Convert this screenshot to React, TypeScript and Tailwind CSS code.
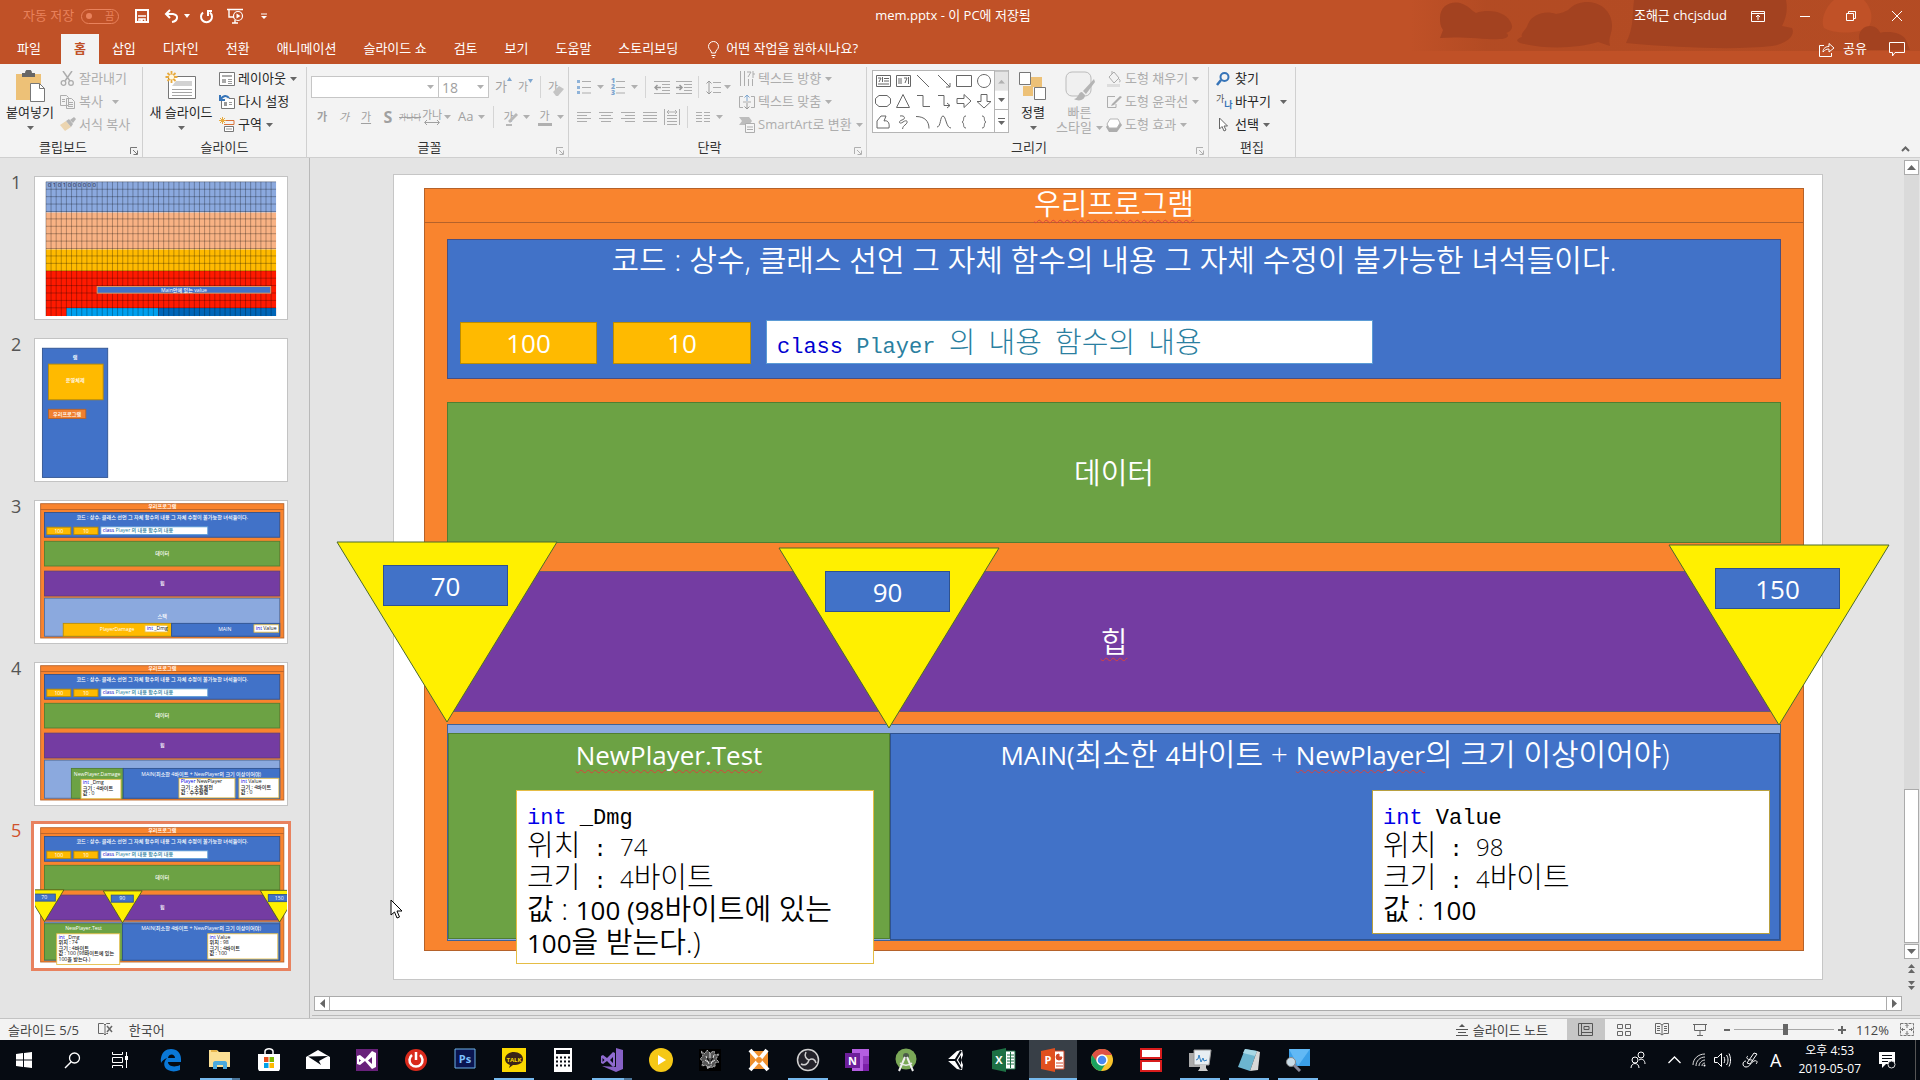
import type { ReactNode } from "react";

const tabsAfterHome = [
  "삽입",
  "디자인",
  "전환",
  "애니메이션",
  "슬라이드 쇼",
  "검토",
  "보기",
  "도움말",
  "스토리보딩",
];

function Caret({ dim = false }: { dim?: boolean }) {
  return (
    <svg width="7" height="4" viewBox="0 0 7 4" className={dim ? "shrink-0 text-[#b0b0b0]" : "shrink-0 text-[#666]"}>
      <path d="M0 0h7L3.500 4z" fill="currentColor" />
    </svg>
  );
}

function Svg({ w, h, children }: { w: number; h: number; children: ReactNode }) {
  return (
    <svg width={w} height={h} viewBox={`0 0 ${w} ${h}`} fill="none" className="shrink-0">
      {children}
    </svg>
  );
}

/* ---------- title bar ---------- */

function TitleBar() {
  return (
    <header className="relative bg-[#c05127] text-white">
      <svg width="510" height="52" viewBox="0 0 510 52" className="absolute top-0 right-0">
        <defs>
          <linearGradient id="haze" x1="0" x2="1">
            <stop offset="0" stopColor="#a84620" stopOpacity="0" />
            <stop offset="0.15" stopColor="#a84620" stopOpacity="0.55" />
            <stop offset="1" stopColor="#a84620" stopOpacity="0.5" />
          </linearGradient>
        </defs>
        <rect width="510" height="51" fill="url(#haze)" />
        <g fill="#a34220">
          <path d="M30 18C30 6 40 1 50 3c8 2 12 8 16 10 12-4 28-2 34 8 4 6 2 10-4 12 4 2 2 5-4 6-14 1-40-3-62-1l3-8c-3-4-3-8-3-12z" />
          <path d="M118 24c4-10 18-14 28-10 6-1 8-2 12-4 6-6 12-8 20-8 16 1 24 12 24 24 0 8-4 12-2 20l-12-4c-20 6-50 8-78 1-4-2-4-4 2-6-2-4 4-6 6-13z" />
          <path d="M224 0h152c2 10 0 18-4 26l10 2c4 8-6 16-20 18-36 4-90 2-146-3 8-16 6-26 8-43z" />
        </g>
        <path d="M424 0h30c8 8 10 20 4 28-12 6-34 6-44 0-4-8 2-22 10-28z" fill="#c05127" />
        <g fill="#a34220">
          <circle cx="460" cy="37" r="11" />
          <path d="M466 34c10-4 26-2 30 6l4 10h-46z" />
        </g>
      </svg>

      <div className="relative grid h-[32px] grid-cols-[1fr_auto_1fr] items-center text-[13px]">
        <div className="flex items-center pl-[23px]">
          <span className="text-[#e9825c]">자동 저장</span>
          <button
            aria-label="자동 저장"
            className="ml-[7px] flex h-[15px] w-[38px] items-center justify-between rounded-full border border-[#e9825c] px-[4px] text-[10px] leading-none text-[#e9825c]"
          >
            <span className="size-[6px] rounded-full bg-[#e9825c]" />끔
          </button>
          <button aria-label="저장" className="ml-[16px]">
            <Svg w={14} h={14}>
              <path d="M1 1h12v12H1z" stroke="#fff" strokeWidth="2" />
              <path d="M3 7h8M4 10h2v3H4zM7 10h3v3H7z" stroke="#fff" strokeWidth="1.500" />
            </Svg>
          </button>
          <button aria-label="실행 취소" className="ml-[15px] flex items-center gap-[5px]">
            <Svg w={15} h={14}>
              <path d="M6 1 2 5l4 4M2 5h7c6 1 5 7-1 8" stroke="#fff" strokeWidth="2" />
            </Svg>
            <svg width="6" height="4" viewBox="0 0 6 4"><path d="M0 0h6L3 4z" fill="#fff" /></svg>
          </button>
          <button aria-label="다시 실행" className="ml-[9px]">
            <Svg w={15} h={15}>
              <path d="M4 3.500a5.500 5.500 0 1 0 7 0M13 2H9v5" stroke="#fff" strokeWidth="2" />
            </Svg>
          </button>
          <button aria-label="처음부터 시작" className="ml-[13px]">
            <Svg w={17} h={16}>
              <path d="M0 1.500h16M2 2v7h5M8 12v3M5 15h6" stroke="#fff" strokeWidth="1.400" />
              <circle cx="11" cy="8" r="4.500" stroke="#fff" strokeWidth="1.200" />
              <path d="M9.500 5.500v5l4-2.500z" fill="#fff" />
            </Svg>
          </button>
          <button aria-label="빠른 실행 도구 모음 사용자 지정" className="ml-[17px]">
            <Svg w={6} h={7}>
              <path d="M0 1h6" stroke="#fff" />
              <path d="M0 3h6L3 6z" fill="#fff" />
            </Svg>
          </button>
        </div>
        <h1 className="mr-[14px]">mem.pptx - 이 PC에 저장됨</h1>
        <div className="flex items-center justify-end pr-[18px]">
          <span>조해근 chcjsdud</span>
          <button aria-label="리본 메뉴 표시 옵션" className="ml-[24px]">
            <Svg w={14} h={11}>
              <path d="M.500.500h13v10H.500zM.500 2.500h13M7 9V4M5 6l2-2 2 2" stroke="#fff" />
            </Svg>
          </button>
          <button aria-label="최소화" className="ml-[35px]">
            <Svg w={10} h={10}><path d="M0 5.500h10" stroke="#fff" /></Svg>
          </button>
          <button aria-label="이전 크기로 복원" className="ml-[36px]">
            <Svg w={10} h={10}><path d="M.500 2.500h7v7h-7zM2.500 2.500v-2h7v7h-2" stroke="#fff" /></Svg>
          </button>
          <button aria-label="닫기" className="ml-[36px]">
            <Svg w={10} h={10}><path d="m0 0 10 10M10 0 0 10" stroke="#fff" /></Svg>
          </button>
        </div>
      </div>

      <nav className="relative flex h-[32px] items-end text-[13px]">
        <button className="ml-[4px] h-[30px] px-[13px]">파일</button>
        <button className="ml-[7px] h-[30px] bg-[#f3f3f3] px-[13px] font-bold text-[#c05127]">홈</button>
        <div className="flex gap-px">
          {tabsAfterHome.map((t) => (
            <button key={t} className="h-[30px] px-[13px]">{t}</button>
          ))}
        </div>
        <button className="ml-[17px] flex h-[30px] items-center gap-[7px]">
          <Svg w={11} h={17}>
            <path d="M3.500 12C3.500 9 .500 8.500.500 5.500a5 5 0 0 1 10 0C10.500 8.500 7.500 9 7.500 12zM3.500 14.500h4M4.500 16.500h2" stroke="#fff" />
          </Svg>
          어떤 작업을 원하시나요?
        </button>
        <button className="ml-auto flex h-[30px] items-center gap-[8px]">
          <Svg w={16} h={15}>
            <path d="M5 3.500H.500v11h12V11" stroke="#fff" />
            <path d="M4 10c0-4 3-5.500 6-5.500V1.500l5 4.500-5 4V7c-3 0-4 1-6 3z" stroke="#fff" />
          </Svg>
          공유
        </button>
        <button aria-label="메모" className="mr-[15px] ml-[22px] h-[30px]">
          <Svg w={16} h={15}>
            <path d="M.500.500h15v10H6L3.500 14v-3.500h-3z" stroke="#fff" />
          </Svg>
        </button>
      </nav>
    </header>
  );
}

/* ---------- ribbon ---------- */

function Group({ label, launcher, dim, className, children }: {
  label: string;
  launcher?: boolean;
  dim?: boolean;
  className: string;
  children: ReactNode;
}) {
  return (
    <section className={`relative flex shrink-0 flex-col border-r border-[#d0d0d0] ${className}`}>
      <div className="flex h-[70px]">{children}</div>
      <h2 className="text-center text-[13px] leading-[20px] text-[#333]">{label}</h2>
      {launcher && (
        <button aria-label={`${label} 설정`} className="absolute right-[4px] bottom-[2px]">
          <Svg w={8} h={8}>
            <path d="M.500 7V.500H7M3 3l4 4M7.500 3.500v4h-4" stroke={dim ? "#b0b0b0" : "#777"} />
          </Svg>
        </button>
      )}
    </section>
  );
}

function RowButton({ icon, text, dim, caret, wide }: {
  icon: ReactNode;
  text: string;
  dim?: boolean;
  caret?: boolean;
  wide?: boolean;
}) {
  return (
    <button className={`flex h-[23px] items-center whitespace-nowrap text-[13px] ${dim ? "text-[#adadad]" : "text-[#262626]"}`}>
      <span className="flex w-[19px] shrink-0 items-center">{icon}</span>
      {text}
      {caret && <span className={wide ? "ml-[9px]" : "ml-[4px]"}><Caret dim={dim} /></span>}
    </button>
  );
}

function BigButton({ icon, lines, dim, className }: { icon: ReactNode; lines: string[]; dim?: boolean; className: string }) {
  return (
    <button className={`flex shrink-0 flex-col items-center whitespace-nowrap text-[13px] leading-[15px] ${dim ? "text-[#adadad]" : "text-[#262626]"} ${className}`}>
      <span className="mt-[3px] mb-[3px] flex h-[32px] items-center">{icon}</span>
      {lines.map((l, i) => (
        <span key={l} className="flex items-center gap-[4px]">
          {l}
          {dim && i === lines.length - 1 && <Caret dim />}
        </span>
      ))}
      {!dim && <span className="mt-[6px] flex"><Caret /></span>}
    </button>
  );
}

function Divider() {
  return <span className="h-[22px] w-px shrink-0 bg-[#d5d5d5]" />;
}

function Lines({ kind }: { kind: "left" | "center" | "right" | "justify" }) {
  const d = {
    left: "M0 .5h14M0 3.500h10M0 6.500h14M0 9.500h10",
    center: "M0 .5h14M2 3.500h10M0 6.500h14M2 9.500h10",
    right: "M0 .5h14M4 3.500h10M0 6.500h14M4 9.500h10",
    justify: "M0 .5h14M0 3.500h14M0 6.500h14M0 9.500h14",
  }[kind];
  return <Svg w={14} h={11}><path d={d} stroke="#adadad" /></Svg>;
}

function ClipboardGroup() {
  return (
    <Group label="클립보드" launcher className="w-[143px] pr-[16px]">
      <BigButton
        className="w-[60px]"
        lines={["붙여넣기"]}
        icon={
          <Svg w={30} h={32}>
            <path d="M1 4h25v26H1z" fill="#edc177" />
            <path d="M7 7V3h3a3.500 3.500 0 0 1 7 0h3v4z" fill="#666" />
            <path d="M15.500 13.500h9l5 5v13h-14z" fill="#fff" stroke="#777" />
            <path d="M24.500 13.500v5h5" stroke="#777" />
          </Svg>
        }
      />
      <div className="flex flex-col">
        <RowButton dim text="잘라내기" icon={
          <Svg w={15} h={15}>
            <path d="m3 0 7 10M12 0 5 10" stroke="#adadad" strokeWidth="1.500" />
            <circle cx="3.500" cy="12" r="2.300" stroke="#adadad" strokeWidth="1.300" />
            <circle cx="11" cy="12" r="2.300" stroke="#adadad" strokeWidth="1.300" />
          </Svg>
        } />
        <RowButton dim caret wide text="복사" icon={
          <Svg w={16} h={14}>
            <path d="M.500.500h6l2 2v8h-8zM6.500 3.500h5l3 3v7h-8z" fill="#f3f3f3" stroke="#adadad" />
            <path d="M8 7.500h5M8 9.500h5M8 11.500h5M2 4.500h3M2 6.500h3" stroke="#adadad" />
          </Svg>
        } />
        <RowButton dim text="서식 복사" icon={
          <Svg w={16} h={15}>
            <path d="M0 8l6-4 5 6-6 4z" fill="#ecd5b0" />
            <path d="m6 4 3-2 4 5-2 3zM10 3l4-3 2 2-3 4z" fill="#b5b5b5" />
          </Svg>
        } />
      </div>
    </Group>
  );
}

function SlidesGroup() {
  return (
    <Group label="슬라이드" className="w-[164px]">
      <BigButton
        className="ml-[4px] w-[68px]"
        lines={["새 슬라이드"]}
        icon={
          <Svg w={32} h={32}>
            <path d="M3.500 6.500h27v22h-27z" fill="#fff" stroke="#777" />
            <path d="M11 11h16v5H7z" fill="#d2d2d2" />
            <path d="M7 19.500h20M7 22.500h20M7 25.500h20" stroke="#a5a5a5" />
            <path d="M6.500 1v12M.500 7h12M2.500 3l8 8M10.500 3l-8 8" stroke="#e8ab3f" strokeWidth="1.800" />
            <circle cx="6.500" cy="7" r="2.500" fill="#fff7df" />
          </Svg>
        }
      />
      <div className="ml-[4px] flex flex-col">
        <RowButton caret text="레이아웃" icon={
          <Svg w={16} h={14}>
            <path d="M.500.500h15v13H.500z" fill="#fff" stroke="#777" />
            <path d="M3 3h10v2H3zM3 7h4v4H3z" fill="#aaa" />
            <path d="M9 7.500h4M9 9.500h4M9 11.500h4" stroke="#999" />
          </Svg>
        } />
        <RowButton text="다시 설정" icon={
          <Svg w={16} h={15}>
            <path d="M2.500 7v7.500h13V4.500H10" fill="#fff" stroke="#777" />
            <path d="M5 8h3v4H5zM10 8h3v1h-3zM10 10h3v1h-3z" fill="#999" />
            <path d="M1 1v5h5M1.500 5.500C4 1 8 1 10 4" stroke="#3674b8" strokeWidth="2" />
          </Svg>
        } />
        <RowButton caret text="구역" icon={
          <Svg w={16} h={16}>
            <path d="M3.500 0v7M0 3.500h7M1 1l5 5M6 1 1 6" stroke="#e8ab3f" />
            <path d="M7 3.500h8v4H5" stroke="#d9733a" />
            <path d="M5.500 9.500h9v5h-9z" fill="#fff" stroke="#777" />
            <path d="M7 12h6" stroke="#999" />
          </Svg>
        } />
      </div>
    </Group>
  );
}

function FontGroup() {
  return (
    <Group label="글꼴" launcher dim className="w-[262px] pr-[16px]">
      <div className="flex flex-col pl-[4px] text-[13px] text-[#a0a0a0]">
        <div className="mt-[9px] flex h-[22px] items-center">
          <label className="relative">
            <select aria-label="글꼴 이름" disabled className="block h-[22px] w-[128px] appearance-none border border-[#c6c6c6] bg-white" />
            <span className="absolute top-[9px] right-[5px] flex"><Caret dim /></span>
          </label>
          <label className="relative">
            <select aria-label="글꼴 크기" disabled className="block h-[22px] w-[50px] appearance-none border border-l-0 border-[#c6c6c6] bg-white pl-[3px] text-[14px]">
              <option>18</option>
            </select>
            <span className="absolute top-[9px] right-[5px] flex"><Caret dim /></span>
          </label>
          <button className="ml-[6px] flex items-start text-[13px]">가<svg width="5" height="4" viewBox="0 0 5 4"><path d="M0 4h5L2.500 0z" fill="#7ea6cf" /></svg></button>
          <button className="ml-[6px] flex items-start text-[11px]">가<svg width="5" height="4" viewBox="0 0 5 4"><path d="M0 0h5L2.500 4z" fill="#7ea6cf" /></svg></button>
          <span className="mx-[7px] flex"><Divider /></span>
          <button className="relative text-[11px]">
            가
            <svg width="12" height="10" viewBox="0 0 12 10" className="absolute top-[7px] left-[5px]"><path d="m0 6 6-6 5 3-6 7H3z" fill="#c4c4c4" /></svg>
          </button>
        </div>
        <div className="mt-[8px] flex h-[22px] items-center text-[11px] whitespace-nowrap">
          <button className="w-[22px] shrink-0 font-bold">가</button>
          <button className="w-[22px] shrink-0 italic">가</button>
          <button className="w-[22px] shrink-0 underline underline-offset-2">가</button>
          <button className="w-[22px] shrink-0 text-[16px] font-bold">S</button>
          <button className="w-[19px] shrink-0 text-[8px] line-through">가나다</button>
          <button aria-label="문자 간격" className="ml-[4px] flex w-[20px] shrink-0 flex-col items-center leading-[11px]">
            가나
            <Svg w={16} h={5}><path d="M1 2.500h14M3 0 .500 2.500 3 5M13 0l2.500 2.500L13 5" stroke="#a0a0a0" /></Svg>
          </button>
          <span className="ml-[2px]"><Caret dim /></span>
          <button className="ml-[7px] text-[13px]">Aa</button>
          <span className="ml-[5px]"><Caret dim /></span>
          <span className="mr-[9px] ml-[8px] flex"><Divider /></span>
          <button className="relative">
            가
            <svg width="14" height="14" viewBox="0 0 14 14" className="absolute top-[3px] left-[3px]"><path d="m2 9 8-8 2 2-8 8zM0 12h6v2H0z" fill="#b8b8b8" /></svg>
          </button>
          <span className="ml-[9px]"><Caret dim /></span>
          <button className="ml-[8px] border-b-[3px] border-[#b0b0b0] px-[2px] leading-[14px]">가</button>
          <span className="ml-[5px]"><Caret dim /></span>
        </div>
      </div>
    </Group>
  );
}

function ParagraphGroup() {
  return (
    <Group label="단락" launcher dim className="w-[298px] pr-[16px]">
      <div className="flex w-[170px] shrink-0 flex-col pl-[8px]">
        <div className="mt-[9px] flex h-[22px] items-center">
          <Svg w={14} h={14}>
            <path d="M5 1.500h9M5 7.500h9M5 13h9" stroke="#adadad" />
            <path d="M0 0h3v3H0zM0 6h3v3H0zM0 11h3v3H0z" fill="#8fb3d9" />
          </Svg>
          <span className="ml-[6px]"><Caret dim /></span>
          <span className="ml-[7px] flex items-center">
            <span className="flex flex-col text-[7px] leading-[6px] font-bold text-[#7ea6cf]"><b>1</b><b>2</b><b>3</b></span>
            <Svg w={10} h={14}><path d="M1 1.500h9M1 7.500h9M1 13h9" stroke="#adadad" /></Svg>
          </span>
          <span className="ml-[6px]"><Caret dim /></span>
          <span className="mr-[8px] ml-[7px] flex"><Divider /></span>
          <Svg w={16} h={13}><path d="M0 .5h16M8 3.500h8M8 6.500h8M8 9.500h8M0 12.500h16" stroke="#adadad" /><path d="M7 6.500H1M3.500 4 1 6.500 3.500 9" stroke="#9a9a9a" strokeWidth="1.500" /></Svg>
          <span className="w-[6px]" />
          <Svg w={16} h={13}><path d="M0 .5h16M8 3.500h8M8 6.500h8M8 9.500h8M0 12.500h16" stroke="#adadad" /><path d="M0 6.500h6M3.500 4 6 6.500 3.500 9" stroke="#9a9a9a" strokeWidth="1.500" /></Svg>
          <span className="mr-[7px] ml-[6px] flex"><Divider /></span>
          <Svg w={15} h={15}><path d="M7 2.500h8M7 7.500h8M7 12.500h8" stroke="#adadad" /><path d="M3 1v13M.500 3.500 3 1l2.500 2.500M.500 11.500 3 14l2.500-2.500" stroke="#9a9a9a" /></Svg>
          <span className="ml-[3px]"><Caret dim /></span>
        </div>
        <div className="mt-[8px] flex h-[22px] items-center">
          <div className="flex gap-[8px]">
            <Lines kind="left" /><Lines kind="center" /><Lines kind="right" /><Lines kind="justify" />
          </div>
          <span className="ml-[7px] flex">
            <Svg w={16} h={16}><path d="M.500 0v16M15.500 0v16M3 6.500h10M3 9.500h10M3 12.500h10M3 15.500h10M3 3h10M5 1 3 3l2 2M11 1l2 2-2 2" stroke="#adadad" /></Svg>
          </span>
          <span className="mr-[8px] ml-[7px] flex"><Divider /></span>
          <Svg w={14} h={11}><path d="M0 .5h6M8 .5h6M0 3.500h6M8 3.500h6M0 6.500h6M8 6.500h6M0 9.500h6M8 9.500h6" stroke="#adadad" /></Svg>
          <span className="ml-[6px]"><Caret dim /></span>
        </div>
      </div>
      <div className="flex flex-col">
        <RowButton dim caret text="텍스트 방향" icon={
          <Svg w={16} h={16}><path d="M1.500 0v15M5.500 0v15M9.500 8v7M13.500 8v7M8 1h4L9 6M14 0v7M14 3h2" stroke="#adadad" /></Svg>
        } />
        <RowButton dim caret text="텍스트 맞춤" icon={
          <Svg w={16} h={16}><path d="M4 2.500H.500v11H4M12 2.500h3.500v11H12M4 8h8" stroke="#adadad" /><path d="M8 7V1M5.500 3.500 8 1l2.500 2.500" stroke="#7ea6cf" /><path d="M8 9v6M5.500 12.500 8 15l2.500-2.500" stroke="#999" /></Svg>
        } />
        <RowButton dim caret text="SmartArt로 변환" icon={
          <Svg w={16} h={16}><path d="M0 0h10l3 4-3 4H0l3-4z" fill="#bdbdbd" /><path d="M6.500 6.500h9v9h-9z" fill="#f6f6f6" stroke="#adadad" /><path d="M8 10h6M8 12.500h6" stroke="#adadad" /></Svg>
        } />
      </div>
    </Group>
  );
}

const shapePaths = [
  "M1.500 2.500h14v11h-14zM9 5.500h5M9 8h5M3 11h11M3 5h3l-2 4M7.500 4v5",
  "M1.500 2.500h14v11h-14zM4 5v6M6 5v6M9 5h3l-2 5M13.500 4v7",
  "m2 2 12 12",
  "m2 2 12 12M14 10v4h-4",
  "M.500 2.500h15v11H.500z",
  "M8 1.500a6.500 6.500 0 1 0 .1 0z",
  "M4 2.500h8l3.500 3v5l-3.500 3H4l-3.500-3v-5z",
  "M8 1.500 1.500 14.500h13z",
  "M2 2.500h6v11h7",
  "M2 2.500h6v10h6M11 10l3 2.500-3 2.500",
  "M1 5.500h7v-4l7 6.500-7 6.500v-4H1z",
  "M5 1.500h6v7h4l-7 6.500-7-6.500h4z",
  "M2 14V7l4-5h5L9 7c3-1 6 1 5 7z",
  "M5 2c5-1 6 3 2 4s-3 5 1 2 6 0 2 3-1 5-3 3",
  "M1 2.500c9 0 13 5 13 12",
  "M1 13C5 13 4 2 7 2s3 12 8 12",
  "M10 2c-4 0-1 5-4 6 3 1 0 6 4 6",
  "M6 2c4 0 1 5 4 6-3 1 0 6-4 6",
];

function DrawingGroup() {
  return (
    <Group label="그리기" launcher dim className="w-[342px] pr-[17px]">
      <div className="mt-[3px] ml-[5px] flex h-[63px] w-[137px] shrink-0 border border-[#b5b5b5] bg-white">
        <div className="grid grow grid-cols-6 grid-rows-3 place-items-center">
          {shapePaths.map((d) => (
            <svg key={d} width="16" height="16" viewBox="0 0 16 16" fill="none">
              <path d={d} stroke="#666" />
            </svg>
          ))}
        </div>
        <div className="flex w-[14px] flex-col divide-y divide-[#b5b5b5] border-l border-[#b5b5b5]">
          <button aria-label="위로" className="flex grow rotate-180 items-center justify-center bg-[#e4e4e4]"><Caret dim /></button>
          <button aria-label="아래로" className="flex grow items-center justify-center"><Caret /></button>
          <button aria-label="자세히" className="flex grow flex-col items-center justify-center gap-[2px]">
            <span className="h-px w-[7px] bg-[#666]" />
            <Caret />
          </button>
        </div>
      </div>
      <BigButton
        className="ml-[4px] w-[40px]"
        lines={["정렬"]}
        icon={
          <Svg w={28} h={28}>
            <path d="M12 5h11v10H12zM4 14h10v10H4z" fill="#edc177" />
            <path d="M.500.500h11v12H.500zM15.500 15.500h11v12h-11z" fill="#fff" stroke="#777" />
          </Svg>
        }
      />
      <BigButton
        dim
        className="w-[53px]"
        lines={["빠른", "스타일"]}
        icon={
          <Svg w={30} h={32}>
            <rect x="1" y="2" width="25" height="24" rx="6" fill="#f0f0f0" stroke="#bbb" />
            <path d="m29 9-11 12 3 3 9-12zM17 22c-4 0-3 6-8 7 5 3 11 1 11-4z" fill="#b5b5b5" />
          </Svg>
        }
      />
      <div className="flex flex-col">
        <RowButton dim caret text="도형 채우기" icon={
          <Svg w={16} h={16}><path d="m3 6 5-5 5 6-5 5zM6 3V0M13 8c2 2 1 3 0 3" stroke="#adadad" /><path d="M1 13h13v3H1z" fill="#ddd" /></Svg>
        } />
        <RowButton dim caret text="도형 윤곽선" icon={
          <Svg w={16} h={14}><path d="M9 1.500H1.500v11H10V9" stroke="#adadad" /><path d="m14 1-8 8-1 2 3-1 8-8z" fill="#adadad" /></Svg>
        } />
        <RowButton dim caret text="도형 효과" icon={
          <Svg w={16} h={14}><path d="M4 3h9l3 4-5 7H3L0 9z" fill="#adadad" /><path d="M4 1h8l2 4-3 5H3L1 6z" fill="#fff" stroke="#b5b5b5" /></Svg>
        } />
      </div>
    </Group>
  );
}

function EditGroup() {
  return (
    <Group label="편집" className="w-[87px]">
      <div className="flex flex-col pl-[7px]">
        <RowButton text="찾기" icon={
          <Svg w={14} h={14}><circle cx="8.500" cy="5" r="4" stroke="#3674b8" strokeWidth="2" /><path d="m5 8-4 5" stroke="#3674b8" strokeWidth="2.500" /></Svg>
        } />
        <RowButton caret wide text="바꾸기" icon={
          <span className="flex items-center text-[9px] leading-none text-[#555]">
            <span className="pb-[6px]">가</span><span className="pt-[6px] font-bold text-[#3674b8]">나</span>
          </span>
        } />
        <RowButton caret text="선택" icon={
          <Svg w={12} h={15}><path d="M3.500 1v11l2.500-2.500L8 14l2-1-2-4h3.500z" fill="#fff" stroke="#666" /></Svg>
        } />
      </div>
    </Group>
  );
}

function Ribbon() {
  return (
    <div className="relative flex h-[94px] shrink-0 border-b border-[#cfcfcf] bg-[#f3f3f3] pt-[3px]">
      <ClipboardGroup />
      <SlidesGroup />
      <FontGroup />
      <ParagraphGroup />
      <DrawingGroup />
      <EditGroup />
      <button aria-label="리본 메뉴 축소" className="mr-[10px] mb-[5px] ml-auto self-end">
        <Svg w={9} h={6}><path d="m1 5 3.500-3.500L8 5" stroke="#666" strokeWidth="2" /></Svg>
      </button>
    </div>
  );
}

/* ---------- thumbnails ---------- */

type TProps = { x: number; y: number; fill?: string; size?: number; anchor?: "start" | "middle"; children: ReactNode };

function T({ x, y, fill = "#fff", size = 29, anchor = "middle", children }: TProps) {
  return <text x={x} y={y} fill={fill} fontSize={size} fontWeight="500" textAnchor={anchor}>{children}</text>;
}

function R({ x, y, w, h, fill, stroke }: { x: number; y: number; w: number; h: number; fill: string; stroke: string }) {
  return <rect x={x} y={y} width={w} height={h} fill={fill} stroke={stroke} strokeWidth="5" />;
}

function ProgramBase() {
  return (
    <>
      <R x={32} y={15} w={1378} h={761} fill="#f9842e" stroke="#b5622a" />
      <path d="M32 48h1378" stroke="#b5622a" strokeWidth="5" />
      <T x={721} y={42}>우리프로그램</T>
      <R x={54} y={65} w={1333} h={140} fill="#4172c8" stroke="#2f528f" />
      <T x={721} y={99}>코드 : 상수, 클래스 선언 그 자체 함수의 내용 그 자체 수정이 불가능한 녀석들이다.</T>
      <R x={67} y={148} w={136} h={42} fill="#ffba00" stroke="#bc8c00" />
      <T x={135} y={179}>100</T>
      <R x={220} y={148} w={137} h={42} fill="#ffba00" stroke="#bc8c00" />
      <T x={288} y={179}>10</T>
      <R x={373} y={146} w={606} h={44} fill="#fff" stroke="#5b9bd5" />
      <T x={384} y={178} fill="#2b7fa0" anchor="start"><tspan fill="#0000c0">class</tspan> Player 의 내용 함수의 내용</T>
      <R x={54} y={228} w={1333} h={140} fill="#6ca244" stroke="#507e32" />
      <T x={721} y={308}>데이터</T>
      <R x={54} y={397} w={1333} h={141} fill="#743ca2" stroke="#5c3d80" />
      <T x={721} y={478}>힙</T>
      <R x={54} y={550} w={1333} h={216} fill="#8ba9de" stroke="#4a6fa5" />
    </>
  );
}

function ThumbNote({ x, y, w, h, type, name, rows = [] }: { x: number; y: number; w: number; h: number; type: string; name: string; rows?: string[] }) {
  return (
    <>
      <R x={x} y={y} w={w} h={h} fill="#fff" stroke="#e5bd45" />
      <T x={x + 10} y={y + 28} fill="#111" anchor="start"><tspan fill="#0000e0">{type}</tspan> {name}</T>
      {rows.map((r, i) => (
        <T key={r} x={x + 10} y={y + 60 + i * 31} fill="#111" anchor="start">{r}</T>
      ))}
    </>
  );
}

function MemoryGridThumb() {
  const cols = Array.from({ length: 45 }, (_, i) => 62 + i * 29);
  const rows = Array.from({ length: 18 }, (_, i) => 27 + i * 42);
  return (
    <>
      <path d="M62 27h1304v174H62z" fill="#8ba9de" />
      <path d="M62 201h1304v210H62z" fill="#f8b284" />
      <path d="M62 411h1304v122H62z" fill="#ffba00" />
      <path d="M62 533h1304v255H62z" fill="#ff1a00" />
      <path d="M178 742h520v46H178z" fill="#00a0ee" />
      <path d="M698 742h668v46H698z" fill="#0066b8" />
      <path d={cols.map((x) => `M${x} 27v761`).join("") + rows.map((y) => `M62 ${y}h1304`).join("")} stroke="#000" strokeOpacity="0.4" strokeWidth="4" />
      <R x={352} y={620} w={984} h={38} fill="#4172c8" stroke="#e5a565" />
      <T x={844} y={650}>Main안에 있는 value</T>
      <T x={72} y={58} size={34} fill="#223" anchor="start">0 1 0 1 0 0 0 0 0 0</T>
    </>
  );
}

function RamThumb() {
  return (
    <>
      <R x={42} y={52} w={370} h={732} fill="#4172c8" stroke="#2f528f" />
      <T x={227} y={112}>램</T>
      <R x={76} y={142} w={310} h={202} fill="#ffba00" stroke="#bc8c00" />
      <T x={228} y={246}>운영체제</T>
      <R x={76} y={398} w={212} h={52} fill="#f08030" stroke="#b5622a" />
      <T x={182} y={434}>우리프로그램</T>
    </>
  );
}

function StackThumb() {
  return (
    <>
      <ProgramBase />
      <T x={721} y={662}>스택</T>
      <R x={160} y={693} w={614} h={73} fill="#ffba00" stroke="#bc8c00" />
      <T x={465} y={738}>PlayerDamage</T>
      <R x={774} y={693} w={613} h={73} fill="#4172c8" stroke="#2f528f" />
      <T x={1075} y={738}>MAIN</T>
      <ThumbNote x={623} y={704} w={127} h={38} type="int" name="_Dmg" />
      <ThumbNote x={1241} y={701} w={140} h={42} type="int" name="Value" />
    </>
  );
}

function DamageThumb() {
  return (
    <>
      <ProgramBase />
      <R x={206} y={597} w={294} h={169} fill="#6ca244" stroke="#507e32" />
      <T x={352} y={638}>NewPlayer.Damage</T>
      <R x={500} y={597} w={887} h={169} fill="#4172c8" stroke="#2f528f" />
      <T x={942} y={638}>MAIN(최소한 4바이트 + NewPlayer의 크기 이상이어야)</T>
      <ThumbNote x={261} y={659} w={226} h={110} type="int" name="_Dmg" rows={["크기 : 4바이트", "값 : 0"]} />
      <ThumbNote x={816} y={653} w={317} h={111} type="Player" name="NewPlayer" rows={["크기 : 소혼설전", "값 : 수수설명"]} />
      <ThumbNote x={1156} y={653} w={226} h={111} type="int" name="Value" rows={["크기 : 4바이트", "값 : 0"]} />
    </>
  );
}

function PointerThumb() {
  return (
    <>
      <ProgramBase />
      <R x={54} y={559} w={442} h={205} fill="#6ca244" stroke="#507e32" />
      <T x={275} y={593}>NewPlayer.Test</T>
      <R x={496} y={559} w={891} h={207} fill="#4172c8" stroke="#2f528f" />
      <T x={941} y={593}>MAIN(최소한 4바이트 + NewPlayer의 크기 이상이어야)</T>
      <g fill="#fff000" stroke="#4c5a1c" strokeWidth="5">
        <path d="M-56 367h220L54 547z" />
        <path d="M387 373h220L496 554z" />
        <path d="M1276 370h220l-110 180z" />
      </g>
      <R x={-10} y={391} w={125} h={40} fill="#4172c8" stroke="#2f528f" />
      <T x={52} y={421}>70</T>
      <R x={432} y={397} w={125} h={40} fill="#4172c8" stroke="#2f528f" />
      <T x={494} y={427}>90</T>
      <R x={1322} y={394} w={124} h={40} fill="#4172c8" stroke="#2f528f" />
      <T x={1384} y={424}>150</T>
      <ThumbNote x={123} y={616} w={357} h={174} type="int" name="_Dmg" rows={["위치 : 74", "크기 : 4바이트", "값 : 100 (98바이트에 있는", "100을 받는다.)"]} />
      <ThumbNote x={979} y={616} w={397} h={143} type="int" name="Value" rows={["위치 : 98", "크기 : 4바이트", "값 : 100"]} />
    </>
  );
}

const thumbs = [MemoryGridThumb, RamThumb, StackThumb, DamageThumb, PointerThumb];

function SlidePanel() {
  return (
    <aside className="w-[310px] shrink-0 border-r border-[#b9b9b9] pt-[15px] pl-[11px]">
      <ol className="flex flex-col gap-[12px]">
        {thumbs.map((Thumb, i) => {
          const active = i === 4;
          return (
            <li key={i} className="flex items-start">
              <span className={`w-[20px] shrink-0 text-[18px] leading-[18px] ${active ? "text-[#d0512c]" : "text-[#555]"}`}>{i + 1}</span>
              <button aria-label={`슬라이드 ${i + 1}`} className={`shrink-0 border-[3px] ${active ? "border-[#e8825f]" : "border-transparent"}`}>
                <svg width="252" height="142" viewBox="0 0 1428 804" className={`block box-content bg-white ${active ? "border border-white" : "border border-[#c3c3c3]"}`}>
                  <Thumb />
                </svg>
              </button>
            </li>
          );
        })}
      </ol>
    </aside>
  );
}

/* ---------- slide ---------- */

function Typo({ children }: { children: ReactNode }) {
  return <span className="underline decoration-[#d8433c] decoration-wavy decoration-1 underline-offset-4">{children}</span>;
}

function En({ children }: { children: ReactNode }) {
  return <span className="text-[26px] font-normal">{children}</span>;
}

function Mono({ children }: { children: ReactNode }) {
  return <span className="font-['Liberation_Mono','Noto_Sans_CJK_KR',monospace] text-[22px] leading-[20px] whitespace-pre">{children}</span>;
}

function Digits({ children }: { children: ReactNode }) {
  return <span className="text-[24px] leading-[20px]">{children}</span>;
}

function Pointer({ value, className }: { value: number; className: string }) {
  return (
    <div className={`absolute h-[182px] w-[222px] ${className}`}>
      <svg width="222" height="182" viewBox="0 0 222 182" className="absolute inset-0">
        <path d="M1 1h220L111 181z" fill="#fff000" stroke="#4c6a2c" />
      </svg>
      <div className="relative mt-[24px] ml-[47px] w-[125px] border border-[#2f528f] bg-[#4172c8] text-center leading-[38px]"><En>{value}</En></div>
    </div>
  );
}

function Slide() {
  return (
    <article className="relative ml-[2px] h-[806px] w-[1430px] shrink-0 border border-[#c6c6c6] bg-white text-[29px] leading-[32px] font-[350] text-white">
      <div className="absolute top-[13px] left-[30px] h-[763px] w-[1380px] border border-[#b5622a] bg-[#f9842e]">
        <div className="h-[34px] border-b border-[#b5622a] text-center leading-[30px]"><Typo>우리프로그램</Typo></div>
      </div>

      <div className="absolute top-[64px] left-[53px] h-[140px] w-[1334px] border border-[#4a4f80] bg-[#4172c8] pt-[4px]">
        <p className="text-center text-[30px]">코드 : 상수, 클래스 선언 그 자체 함수의 내용 그 자체 수정이 불가능한 녀석들이다.</p>
        <div className="mt-[44px] flex items-end pl-[12px]">
          <div className="h-[42px] w-[137px] border border-[#bc8c00] bg-[#ffba00] text-center leading-[38px]"><En>100</En></div>
          <div className="ml-[16px] h-[42px] w-[138px] border border-[#bc8c00] bg-[#ffba00] text-center leading-[38px]"><En>10</En></div>
          <div className="ml-[15px] h-[44px] w-[607px] border border-[#5b9bd5] bg-white pl-[10px] leading-[42px] font-light text-[#2b7fa0]">
            <Mono><span className="text-[#0000d0]">class</span> Player </Mono>의<Mono> </Mono>내용<Mono> </Mono>함수의<Mono> </Mono>내용
          </div>
        </div>
      </div>

      <div className="absolute top-[227px] left-[53px] flex h-[141px] w-[1334px] items-center justify-center border border-[#507e32] bg-[#6ca244]">데이터</div>
      <div className="absolute top-[396px] left-[53px] flex h-[141px] w-[1334px] items-center justify-center border border-[#6a5a70] bg-[#743ca2]"><Typo>힙</Typo></div>

      <div className="absolute top-[549px] left-[53px] h-[217px] w-[1334px] border border-[#3e6299] bg-[#8ba9de] pt-[8px]">
        <div className="flex">
          <div className="h-[206px] w-[442px] border border-[#507e32] bg-[#6ca244] pt-[4px] text-center"><Typo><En>NewPlayer.Test</En></Typo></div>
          <div className="h-[207px] grow border border-[#2f528f] bg-[#4172c8] pt-[4px] text-center text-[30px]">
            <En>MAIN(</En>최소한 <En>4</En>바이트 + <Typo><En>NewPlayer</En></Typo>의 크기 이상이어야)
          </div>
        </div>
      </div>

      <Pointer value={70} className="top-[366px] left-[-58px]" />
      <Pointer value={90} className="top-[372px] left-[384px]" />
      <Pointer value={150} className="top-[369px] left-[1274px]" />

      <div className="absolute top-[615px] left-[122px] h-[174px] w-[358px] border border-[#e5bd45] bg-white pt-[6px] pl-[10px] font-light text-black">
        <p><Mono><span className="text-[#0000e8]">int</span> _Dmg</Mono></p>
        <p>위치<Mono> : </Mono><Digits>74</Digits></p>
        <p>크기<Mono> : </Mono><Digits>4</Digits>바이트</p>
        <p className="font-[350]">값 : <En>100 (98</En>바이트에 있는 <En>100</En>을 받는다.)</p>
      </div>
      <div className="absolute top-[615px] left-[978px] h-[144px] w-[398px] border border-[#b8a040] bg-white pt-[6px] pl-[10px] font-light text-black">
        <p><Mono><span className="text-[#0000e8]">int</span> Value</Mono></p>
        <p>위치<Mono> : </Mono><Digits>98</Digits></p>
        <p>크기<Mono> : </Mono><Digits>4</Digits>바이트</p>
        <p className="font-[350]">값 : <En>100</En></p>
      </div>

      {/* mouse cursor */}
      <svg width="14" height="21" viewBox="0 0 14 21" className="absolute top-[724px] left-[-4px]">
        <path d="M1 1v15l3.500-3 2.500 6 2.500-1-2.500-6h5z" fill="#fff" stroke="#000" />
      </svg>
    </article>
  );
}

function Arrow({ d }: { d: string }) {
  return <Svg w={9} h={9}><path d={d} fill="#666" /></Svg>;
}

function Canvas() {
  const cell = "flex shrink-0 items-center justify-center border border-[#ababab] bg-white";
  return (
    <main className="flex min-w-0 grow flex-col">
      <div className="flex min-h-0 grow">
        <div className="flex min-w-0 grow flex-col">
          <div className="flex min-h-0 grow items-center justify-center"><Slide /></div>
          <div className="mr-[2px] ml-[4px] flex h-[15px] shrink-0">
            <button aria-label="왼쪽" className={`${cell} w-[16px]`}><Arrow d="M7 0v9L2 4.500z" /></button>
            <div className="-ml-px grow border border-[#ababab] bg-white" />
            <button aria-label="오른쪽" className={`${cell} -ml-px w-[16px]`}><Arrow d="M2 0v9l5-4.500z" /></button>
          </div>
        </div>
        <div className="mt-[2px] mr-[1px] flex w-[15px] flex-col bg-[#dadada]">
          <button aria-label="위로" className={`${cell} h-[15px]`}><Arrow d="M0 7h9L4.500 2z" /></button>
          <div className="grow" />
          <div className="h-[154px] border border-[#ababab] bg-white" />
          <button aria-label="아래로" className={`${cell} mt-[1px] h-[15px]`}><Arrow d="M0 2h9L4.500 7z" /></button>
          <div className="flex h-[52px] flex-col items-center justify-start gap-[8px] bg-[#e4e4e4] pt-[5px]">
            <Arrow d="M1 4h7L4.500 0zM1 9h7L4.500 5z" />
            <Arrow d="M1 0h7L4.500 4zM1 5h7L4.500 9z" />
          </div>
        </div>
      </div>
      <div className="mt-[4px] ml-[2px] h-[3px] shrink-0 border-t border-[#b9b9b9]" />
    </main>
  );
}

/* ---------- status bar ---------- */

function StatusBar() {
  return (
    <footer className="flex h-[22px] shrink-0 items-center border-t border-[#c3c3c3] bg-[#f3f3f3] text-[13px] leading-[18px] text-[#444]">
      <span className="ml-[8px]">슬라이드 5/5</span>
      <button aria-label="맞춤법 검사" className="ml-[19px]">
        <Svg w={15} h={13}><path d="M7 2 5.500.500h-5v10h5L7 12zM7 2 8.500.500H12M7 12l1.500-1.500H10" stroke="#666" /><path d="m9 3 5 6M14 3 9 9" stroke="#666" strokeWidth="1.500" /></Svg>
      </button>
      <span className="ml-[16px]">한국어</span>
      <button className="ml-auto flex items-center gap-[5px]">
        <Svg w={12} h={12}><path d="M0 5.500h12M2 8.500h8M0 11.500h12" stroke="#555" /><path d="M3 3h6L6 0z" fill="#555" /></Svg>
        슬라이드 노트
      </button>
      <div className="ml-[19px] flex h-full">
        <button aria-label="기본" className="flex w-[38px] items-center justify-center bg-[#c6c6c6]">
          <Svg w={15} h={13}><path d="M.500.500h14v12H.500zM3.500.500v12M6 3.500h5v3H6zM4 9.500h10" stroke="#555" /></Svg>
        </button>
        <button aria-label="여러 슬라이드" className="flex w-[38px] items-center justify-center">
          <Svg w={14} h={12}><path d="M.500.500h5v4h-5zM8.500.500h5v4h-5zM.500 7.500h5v4h-5zM8.500 7.500h5v4h-5z" stroke="#666" /></Svg>
        </button>
        <button aria-label="읽기용 보기" className="flex w-[38px] items-center justify-center">
          <Svg w={14} h={13}><path d="M7 2 5 .500H.500v10H5L7 12l2-1.500h4.500V.500H9zM7 2v10M2 3.500h3M2 5.500h3M2 7.500h3M9 3.500h3M9 5.500h3M9 7.500h3" stroke="#666" /></Svg>
        </button>
        <button aria-label="슬라이드 쇼" className="flex w-[38px] items-center justify-center">
          <Svg w={14} h={13}><path d="M0 1.500h14M1.500 2v5.500h11V2M7 8v4M4 12.500h6" stroke="#666" /></Svg>
        </button>
      </div>
      <button aria-label="축소" className="ml-[5px] h-[2px] w-[6px] bg-[#666]" />
      <label className="relative mx-[4px] flex items-center">
        <input
          type="range"
          aria-label="확대/축소"
          defaultValue={52}
          className="h-[14px] w-[100px] appearance-none bg-[linear-gradient(#a8a8a8,#a8a8a8)] bg-[length:100%_1px] bg-center bg-no-repeat [&::-webkit-slider-thumb]:h-[11px] [&::-webkit-slider-thumb]:w-[5px] [&::-webkit-slider-thumb]:appearance-none [&::-webkit-slider-thumb]:bg-[#666]"
        />
      </label>
      <button aria-label="확대"><Svg w={8} h={8}><path d="M0 4h8M4 0v8" stroke="#666" strokeWidth="2" /></Svg></button>
      <span className="ml-[10px]">112%</span>
      <button aria-label="창에 맞춤" className="mr-[6px] ml-[11px]">
        <Svg w={14} h={13}><path d="M.500.500h13v12H.500z" stroke="#777" strokeDasharray="3 1" /><path d="M7 1.500v10M1.500 6.500h11M5.500 3 7 1.500 8.500 3M5.500 10 7 11.500 8.500 10M3 5 1.500 6.500 3 8M11 5l1.500 1.500L11 8" stroke="#777" /><path d="M5 5h4v3H5z" fill="#f3f3f3" /></Svg>
      </button>
    </footer>
  );
}

/* ---------- taskbar ---------- */

function App24({ children }: { children: ReactNode }) {
  return <svg width="24" height="24" viewBox="0 0 24 24" fill="none">{children}</svg>;
}

const apps: { name: string; state?: "open" | "multi" | "active"; icon: ReactNode }[] = [
  { name: "Edge", icon: <path d="M2 10C3 4 7 1 12 1c6 0 10 4 10 10v3H9c0 4 6 6 12 3v5c-3 1-6 2-9 1-7-1-9-8-4-13-3 1-5 3-6 5 0-2-.5-3 0-5zm7 0h7c0-4-6-5-7 0z" fill="#0a78d7" /> },
  { name: "파일 탐색기", state: "multi", icon: <><path d="M1 2h8l2 2h11v15H1z" fill="#fbdf94" /><path d="M3 2h6v2H3z" fill="#e8b64c" /><path d="M5 21v-6c0-1 1-2 2-2h10c1 0 2 1 2 2v6h-4v-4H9v4z" fill="#4aa9dd" /></> },
  { name: "Store", icon: <><path d="M8 7V3c1-3 7-3 8 0v4" stroke="#fff" strokeWidth="1.500" /><path d="M1 6h22v15l-1 2H2l-1-2z" fill="#fff" /><path d="M7 9h4.500v5H7z" fill="#e8511f" /><path d="M12.500 9H17v5h-4.500z" fill="#7cb900" /><path d="M7 15h4.500v5H7z" fill="#00a1ea" /><path d="M12.500 15H17v5h-4.500z" fill="#fdb900" /></> },
  { name: "메일", icon: <><path d="M0 9 12 2l12 7v12H0z" fill="#fff" /><path d="m2 8.500 20-.5-9 5 2 4-6-4z" fill="#060b12" /></> },
  { name: "Visual Studio", icon: <><path d="M1 1h22v22H1z" fill="#68217a" /><path d="m2 8 3-1 5 4 7-8 4 2v14l-4 2-7-8-5 4-3-1zm2 3v3l2-1.500zm13-2-4 3.500 4 3.500z" fill="#fff" fillRule="evenodd" /></> },
  { name: "전원", icon: <><circle cx="12" cy="12" r="11" fill="#d92a1c" /><path d="M8 7a6.500 6.500 0 1 0 8 0M12 4v8" stroke="#fff" strokeWidth="2.500" /></> },
  { name: "Photoshop", icon: <><path d="M2 1h20v19H2z" fill="#0a1550" stroke="#6db2e8" /><text x="12" y="15" fontSize="11" fontWeight="bold" fill="#7cc0ff" textAnchor="middle">Ps</text></> },
  { name: "카카오톡", state: "open", icon: <><path d="M0 0h24v24H0z" fill="#fbd800" /><path d="M12 4c-5 0-9 3-9 7 0 3 2 5 5 6l-1 3 4-3c6 0 10-2 10-6s-4-7-9-7z" fill="#3a2418" /><text x="12" y="13.500" fontSize="6" fontWeight="bold" fill="#fbd800" textAnchor="middle">TALK</text></> },
  { name: "계산기", icon: <><path d="M3 0h18v24H3z" fill="#fff" /><path d="M5 2h14v4H5z" fill="#0a0d14" /><path d="M5 9.500h2M9 9.500h2M13 9.500h2M17 9.500h2M5 13.500h2M9 13.500h2M13 13.500h2M17 13.500h2M5 17.500h2M9 17.500h2M13 17.500h2M17 17.500h2" stroke="#0a0d14" strokeWidth="2" /></> },
  { name: "Visual Studio 2017", state: "multi", icon: <><path d="m16 0 7 2v19l-7 3-14-6 14 1z" fill="#8661c5" /><path d="m1 8 2-1 4 3 6-6 2 1v13l-2 1-6-6-4 3-2-1zm1.500 2v4l2-2zM13 9l-3 3 3 3z" fill="#8f6bd0" fillRule="evenodd" /></> },
  { name: "플레이어", icon: <><circle cx="12" cy="12" r="12" fill="#f5c816" /><path d="M9 7v10l8-5z" fill="#fff" /></> },
  { name: "게임", icon: <><path d="M1 1h22v22H1z" fill="#000" /><path d="m3 3 4 3 2-4 3 3 4-2 1 4 4-1-3 5 3 3-4 1v4l-4-2-3 4-2-4-4 1 1-5-3-2 3-3z" fill="#555" stroke="#bbb" strokeDasharray="2 1" /><path d="m8 8 3 8M16 7l-3 9M12 5v5M7 12l3 2M17 12l-3 2M9 19h6" stroke="#e0e0e0" /><path d="M9 10l2 3M15 10l-2 3" stroke="#111" strokeWidth="1.500" /></> },
  { name: "도구", icon: <><path d="M3 3h18v18H3z" fill="#ee8f2d" /><path d="m3 2 9 10L20 2M3 22l9-10 9 10" stroke="#fff" strokeWidth="4" /><circle cx="12" cy="12" r="3" fill="#ee8f2d" /></> },
  { name: "OBS", state: "open", icon: <><circle cx="12" cy="12" r="10.500" fill="#24232a" stroke="#d0d0d0" strokeWidth="1.500" /><path d="M10 4c-2 4 0 7 3 8 3-2 6-1 7 3M13 12c-1 4-4 6-8 4" stroke="#d0d0d0" strokeWidth="1.500" /></> },
  { name: "OneNote", icon: <><path d="M7 1h17v22H7z" fill="#b45ee0" /><path d="M18 8h6v8h-6z" fill="#8e36bb" /><path d="M18 16h6v7h-6z" fill="#7a1fa8" /><path d="M0 5h15v15H0z" fill="#6d1f9a" /><text x="7.500" y="16.500" fontSize="11" fontWeight="bold" fill="#fff" textAnchor="middle">N</text></> },
  { name: "Android Studio", icon: <><circle cx="12" cy="11" r="10.500" fill="#7aa857" /><circle cx="12" cy="8" r="3" fill="#4b5b49" /><path d="M11 9 5 23M13 9l6 14" stroke="#eee" strokeWidth="2" /><path d="M6 15c4 3 8 3 12 0" stroke="#eee" strokeWidth="1.500" /></> },
  { name: "Unity", icon: <><path d="m4 12 10-9 5-1 1 5-2 5 2 5-1 5-5-1z" fill="#fff" /><path d="M12.500 12H3M12.500 12 18 3M12.500 12 18 21" stroke="#060b12" strokeWidth="2" /><path d="m18 7-3 5 3 5z" fill="#060b12" /></> },
  { name: "Excel", icon: <><path d="M13 3h10v18H13z" fill="#fff" stroke="#1d7044" /><path d="M15 7h7M15 10h7M15 13h7M15 16h7M18.500 4v16" stroke="#1d7044" /><path d="m0 3 14-3v24L0 21z" fill="#1d7044" /><text x="7" y="16" fontSize="11" fontWeight="bold" fill="#fff" textAnchor="middle">X</text></> },
  { name: "PowerPoint", state: "active", icon: <><path d="M13 3h10v18H13z" fill="#fff" stroke="#d24726" /><path d="M18 6a3 3 0 1 0 3 3h-3zM15 15h7M15 18h7" fill="#d24726" stroke="#d24726" /><path d="m0 3 14-3v24L0 21z" fill="#e0501f" /><text x="7" y="16" fontSize="11" fontWeight="bold" fill="#fff" textAnchor="middle">P</text></> },
  { name: "Chrome", icon: <><circle cx="12" cy="12" r="11" fill="#f8c32c" /><path d="M12 1C6 1 3 5 2 7l5 8 5-8h10C20 3 16 1 12 1z" fill="#de5145" /><path d="M2 7c-3 7 1 15 9 16l5-8H8z" fill="#1aa260" /><circle cx="12" cy="12" r="5" fill="#4a88f0" stroke="#fff" strokeWidth="1.500" /></> },
  { name: "메모", icon: <><path d="M2 1h20v9H2zM2 13h20v10H2z" fill="#fff" stroke="#d81c1c" strokeWidth="2" /></> },
  { name: "성능 모니터", state: "open", icon: <><path d="M1 5h14v14H1z" fill="#aaa" /><path d="M6 2h17l-2 15H6z" fill="#e8eef2" stroke="#999" /><path d="m8 12 2-1 1-4 2 7 2-4 1 3 3-1" stroke="#3180c4" /><path d="M12 17h6v3l2 3H10l2-3z" fill="#ccc" /></> },
  { name: "메모장", state: "open", icon: <><path d="m8 1 12 2-7 20-12-4z" fill="#6cb5cf" /><path d="m8 1 12 2-2 5-12-3z" fill="#a8d8e6" /><path d="m20 3 3 1-2 18-8 1z" fill="#d8d8d8" /></> },
  { name: "돋보기", state: "open", icon: <><path d="M3 1h21v17H3z" fill="#3a9fe8" /><path d="M3 1h21L12 18z" fill="#62b9f5" /><circle cx="5" cy="14" r="4.500" fill="#c9dce8" stroke="#888" /><path d="m8 17 6 6" stroke="#889" strokeWidth="3" /></> },
];

function Taskbar() {
  return (
    <div className="flex h-[40px] shrink-0 items-center bg-[#060b12] text-white">
      <button aria-label="시작" className="flex w-[48px] justify-center">
        <Svg w={16} h={16}><path d="m0 2 7-1v6.500H0zM8 1l8-1v7.500H8zM0 8.500h7V15l-7-1zM8 8.500h8V16l-8-1z" fill="#fff" /></Svg>
      </button>
      <button aria-label="검색" className="flex w-[48px] justify-center">
        <Svg w={17} h={17}><circle cx="10.500" cy="6" r="5" stroke="#fff" strokeWidth="1.300" /><path d="M7 10 1 16" stroke="#fff" strokeWidth="1.500" /></Svg>
      </button>
      <button aria-label="작업 보기" className="mr-[3px] flex w-[48px] justify-center">
        <Svg w={17} h={16}><path d="M.500 0v2.500h10V0M.500 5.500h10v5H.500zM.500 16v-2.500h10V16M14.500 0v16" stroke="#fff" /><path d="M13 4h3v4h-3z" fill="#fff" /></Svg>
      </button>
      <div className="flex h-full gap-px">
        {apps.map((a) => (
          <button key={a.name} aria-label={a.name} className={`flex w-[48px] flex-col items-center pt-[8px] ${a.state === "active" ? "bg-[#383f47]" : ""}`}>
            <App24>{a.icon}</App24>
            {a.state && (
              <span className={`mt-auto flex h-[2px] shrink-0 bg-[#76b9ed] ${a.state === "active" ? "w-full" : "w-[40px]"}`}>
                {a.state === "multi" && <span className="ml-auto w-[8px] bg-[#4a7599]" />}
              </span>
            )}
          </button>
        ))}
      </div>
      <div className="ml-auto flex h-full items-center">
        <Svg w={16} h={18}>
          <circle cx="11" cy="4" r="3" stroke="#fff" /><circle cx="5" cy="9" r="3" stroke="#fff" />
          <path d="M1 17c0-6 8-6 8 0M9 9c3-2 6 0 6 4" stroke="#fff" />
        </Svg>
        <span className="w-[22px]" />
        <Svg w={13} h={8}><path d="m.500 7 6-6 6 6" stroke="#fff" strokeWidth="1.300" /></Svg>
        <span className="w-[11px]" />
        <Svg w={14} h={14}><path d="M1 12C1 6 6 1 13 1M4 13c0-5 4-9 9-9M7 13c0-3 3-6 6-6M10 13c0-2 1-3 3-3" stroke="#ddd" /><circle cx="12.500" cy="12.500" r="1" fill="#fff" /></Svg>
        <span className="w-[8px]" />
        <Svg w={17} h={14}><path d="M.500 4.500h3l4-4v13l-4-4h-3zM10 4c1 2 1 4 0 6M12.500 2c2 3 2 7 0 10M15 .500c2 4 2 9 0 13" stroke="#fff" /></Svg>
        <span className="w-[11px]" />
        <Svg w={17} h={16}><path d="m5 11 7-10 3 1-7 10zM4 9c-4 0-4 6 0 6s5-5 8-6 4 1 2 3M10 8c-4 0-7-2-4-4" stroke="#fff" /></Svg>
        <span className="ml-[11px] text-[18px] leading-none">A</span>
        <div className="ml-[17px] text-center text-[12px] leading-[18px] whitespace-nowrap">
          <p>오후 4:53</p>
          <p>2019-05-07</p>
        </div>
        <button aria-label="알림" className="ml-[18px]">
          <Svg w={17} h={17}><path d="M0 0h16v12H7l-4 4v-4H0z" fill="#fff" /><path d="M3 3.500h10M3 6.500h10M3 9.500h6" stroke="#060b12" /><circle cx="12.500" cy="12.500" r="3.500" fill="#060b12" stroke="#ddd" /></Svg>
        </button>
        <span className="mr-[4px] ml-[19px] h-full w-px bg-[#555]" />
      </div>
    </div>
  );
}

export default function App() {
  return (
    <div className="flex h-screen flex-col overflow-hidden bg-[#e4e4e4] font-['Open_Sans','Noto_Sans_CJK_KR',sans-serif]">
      <TitleBar />
      <Ribbon />
      <div className="flex min-h-0 grow">
        <SlidePanel />
        <Canvas />
      </div>
      <StatusBar />
      <Taskbar />
    </div>
  );
}
